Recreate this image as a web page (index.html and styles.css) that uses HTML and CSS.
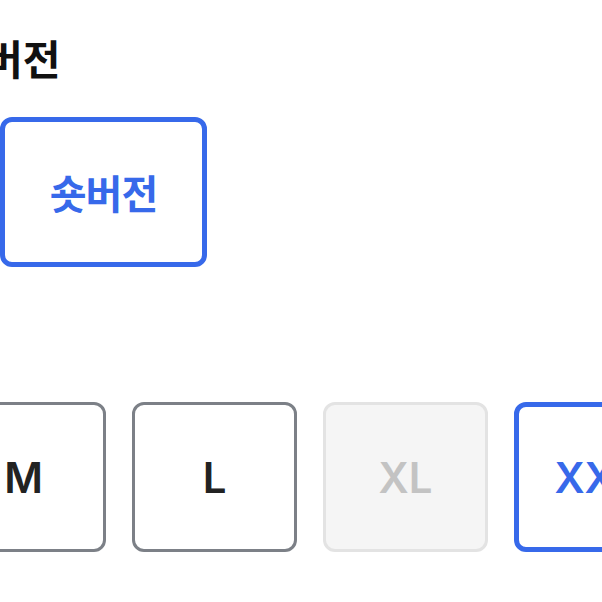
FILE: index.html
```html
<!DOCTYPE html>
<html lang="ko">
<head>
    <meta charset="UTF-8">
    <meta name="viewport" content="width=device-width, initial-scale=1.0">
    <title>옵션 선택</title>
    <link rel="stylesheet" href="styles.css">
</head>
<body>

<div class="page">
    <h2 class="group-title">버전</h2>
    <div class="option-row">
        <button class="option version selected">숏버전</button>
    </div>

    <div class="option-row sizes">
        <button class="option size">M</button>
        <button class="option size">L</button>
        <button class="option size disabled" disabled>XL</button>
        <button class="option size selected">XXL</button>
    </div>
</div>

</body>
</html>
```

FILE: styles.css
```css
body {
    margin: 0;
    padding: 0;
    background-color: #ffffff;
    font-family: "Noto Sans CJK KR", "Noto Sans", sans-serif;
    overflow: hidden;
}

.page {
    padding-top: 33px;
    width: 900px;
}

.group-title {
    margin: 0 0 36px -15px;
    font-size: 41px;
    line-height: 48px;
    font-weight: 700;
    color: #111111;
}

.option-row {
    display: flex;
    gap: 26px;
}

.option {
    box-sizing: border-box;
    display: flex;
    justify-content: center;
    align-items: center;
    background-color: #ffffff;
    border: 3px solid #7c8087;
    border-radius: 12px;
    color: #222222;
    font-family: Inter, "Noto Sans CJK KR", sans-serif;
    font-weight: 600;
    padding: 0;
    cursor: pointer;
}

.version {
    width: 207px;
    height: 150px;
    font-family: "Noto Sans CJK KR", sans-serif;
    font-size: 40px;
    font-weight: 700;
    letter-spacing: -1px;
}

.sizes {
    margin-top: 135px;
    margin-left: -59px;
}

.size {
    width: 165px;
    height: 150px;
    font-size: 42px;
}

.option.selected {
    border: 5px solid #3769ea;
    color: #3769ea;
}

.option.disabled {
    background-color: #f5f5f5;
    border-color: #e3e3e3;
    color: #c3c3c3;
    cursor: default;
}
```
